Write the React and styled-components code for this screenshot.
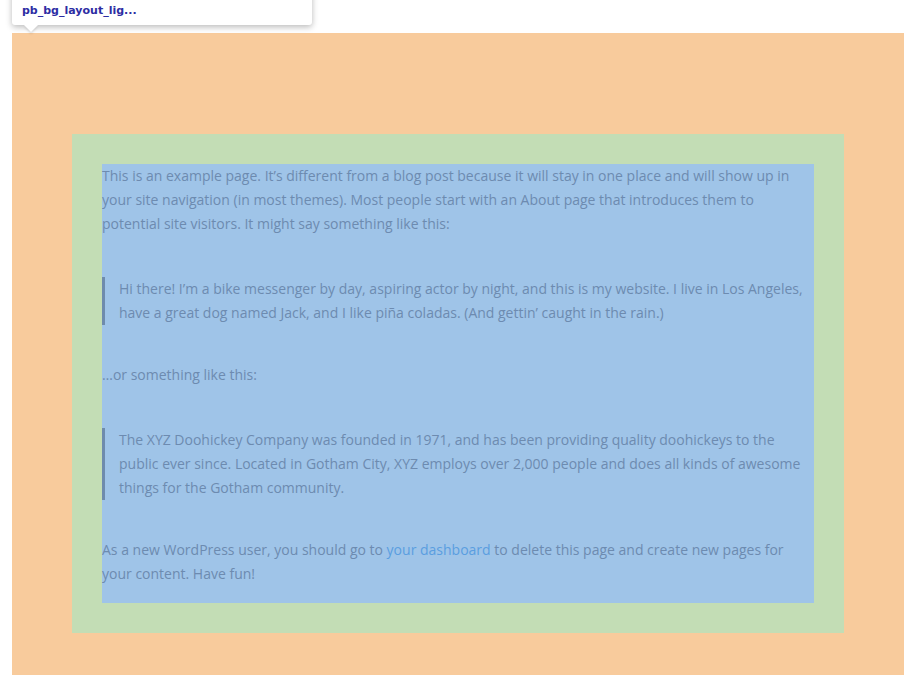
import React from 'react'
import styled, { createGlobalStyle } from 'styled-components'

const GlobalStyle = createGlobalStyle`
  html, body {
    margin: 0;
    padding: 0;
    background: #ffffff;
    overflow: hidden;
  }
  body {
    font-family: "Open Sans", "Liberation Sans", sans-serif;
  }
`

const Page = styled.div`
  position: relative;
  width: 921px;
  height: 675px;
  padding-top: 33px;
  box-sizing: border-box;
  overflow: hidden;
`

const Section = styled.section`
  margin: 0 17px 0 12px;
  background: #f8cb9c;
  padding: 101px 60px 42px;
`

const Row = styled.div`
  background: #c3ddb5;
  padding: 30px;
`

const Module = styled.div`
  background: #9fc4e8;
  color: #6d8bb0;
  font-size: 14px;
  line-height: 24px;
  padding-bottom: 1px;
`

const Para = styled.p`
  margin: 0;
  padding-bottom: 16px;
`

const Quote = styled.blockquote`
  margin: 25px 0 38px;
  border-left: 3px solid #6e8bad;
  padding-left: 14px;

  p {
    margin: 0;
  }
`

const Link = styled.a`
  color: #5a9ee0;
  text-decoration: none;
`

const Tip = styled.div`
  position: absolute;
  left: 12px;
  top: -20px;
  width: 300px;
  background: #ffffff;
  border-radius: 3px;
  box-shadow: 0 2px 6px rgba(0, 0, 0, 0.28);
  padding: 4px 10px 5px;
  box-sizing: border-box;
  font-family: "DejaVu Sans", Verdana, sans-serif;
  font-size: 11px;
  font-weight: bold;
  line-height: 18px;
  color: #2d2da3;

  &::after {
    content: '';
    position: absolute;
    left: 12px;
    bottom: -7px;
    border-left: 7px solid transparent;
    border-right: 7px solid transparent;
    border-top: 7px solid #ffffff;
    filter: drop-shadow(0 2px 1px rgba(0, 0, 0, 0.12));
  }
`

const TipLine = styled.div`
  white-space: nowrap;
  overflow: hidden;
`

export default function App() {
  return (
    <>
      <GlobalStyle />
      <Page>
        <Section>
          <Row>
            <Module>
              <Para>
                This is an example page. It’s different from a blog post because it will stay in one place and will show up in your site navigation (in most themes). Most people start with an About page that introduces them to potential site visitors. It might say something like this:
              </Para>
              <Quote>
                <p>
                  Hi there! I’m a bike messenger by day, aspiring actor by night, and this is my website. I live in Los Angeles, have a great dog named Jack, and I like piña coladas. (And gettin’ caught in the rain.)
                </p>
              </Quote>
              <Para>…or something like this:</Para>
              <Quote>
                <p>
                  The XYZ Doohickey Company was founded in 1971, and has been providing quality doohickeys to the public ever since. Located in Gotham City, XYZ employs over 2,000 people and does all kinds of awesome things for the Gotham community.
                </p>
              </Quote>
              <Para>
                As a new WordPress user, you should go to <Link href="#">your dashboard</Link> to delete this page and create new pages for your content. Have fun!
              </Para>
            </Module>
          </Row>
        </Section>
        <Tip>
          <TipLine>.et_pb_section.et_pb_section_0.et_pb_with_bg</TipLine>
          <TipLine>pb_bg_layout_lig...</TipLine>
        </Tip>
      </Page>
    </>
  )
}
